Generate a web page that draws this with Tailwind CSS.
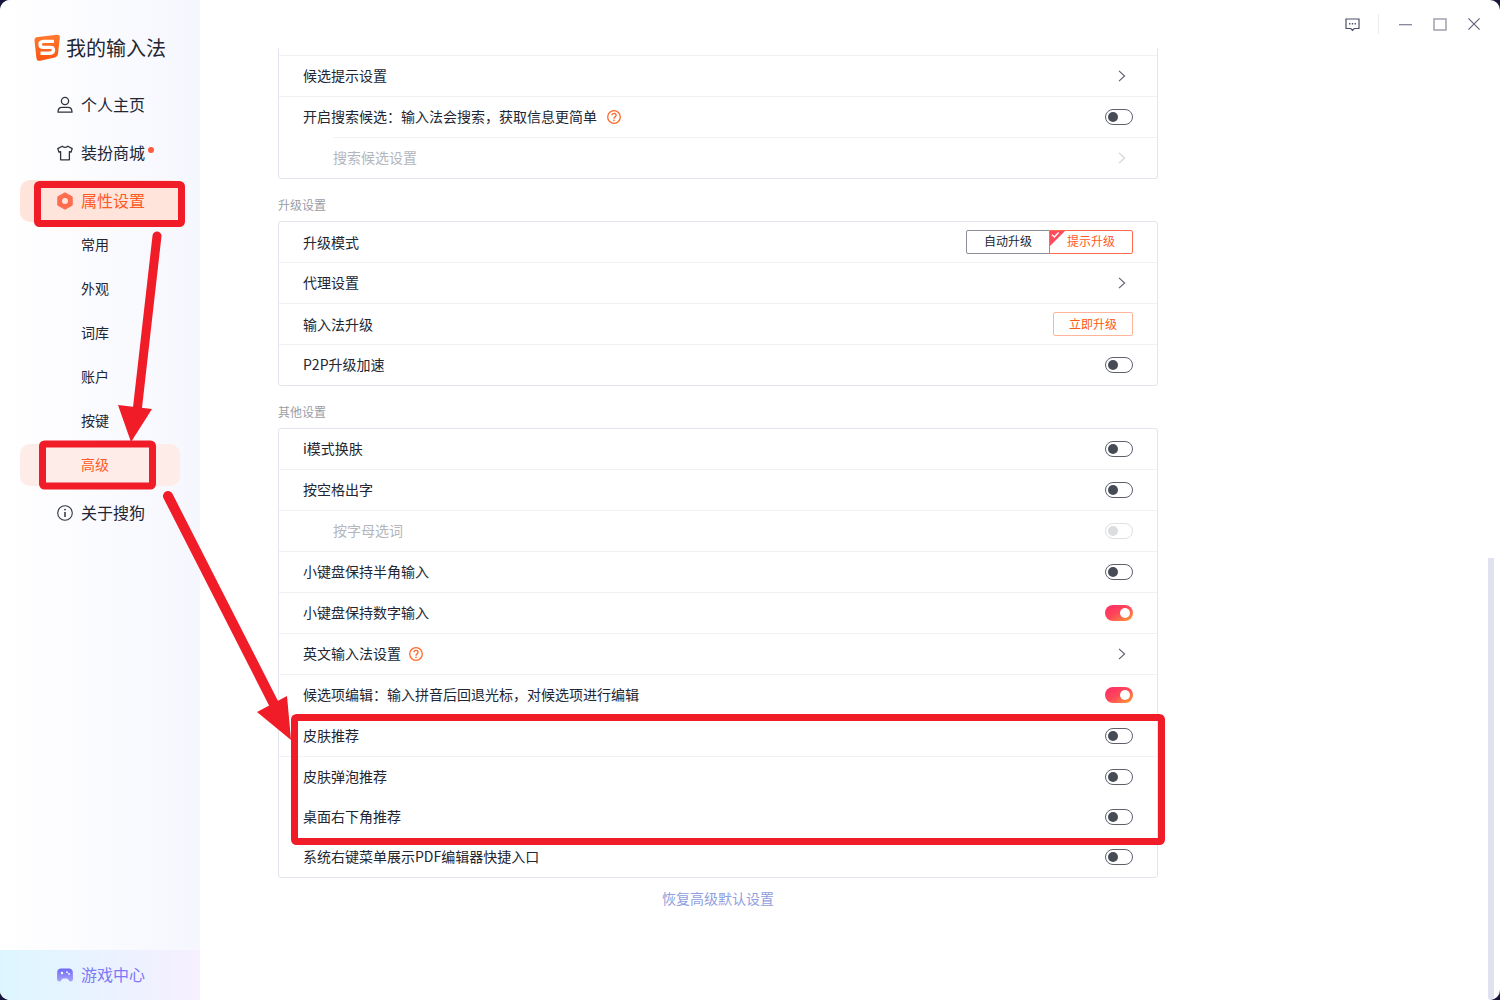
<!DOCTYPE html>
<html lang="zh-CN">
<head>
<meta charset="UTF-8">
<title>我的输入法</title>
<script src="https://cdn.jsdelivr.net/npm/@tailwindcss/browser@4"></script>
</head>
<body class="bg-[#17163f] font-['Noto_Sans_CJK_SC','Noto_Sans',sans-serif] text-[#222632]">

<div class="relative flex h-[1000px] w-[1500px] overflow-hidden rounded-[10px] bg-white">

    <!-- Sidebar -->
    <aside class="flex h-full w-[200px] shrink-0 flex-col bg-gradient-to-r from-white to-[#f6f7fe]">
        <div class="flex h-[81px] items-center gap-[5px] pl-[33px] pt-[15px]">
            <svg width="28" height="28" viewBox="0 0 28 28">
                <defs><linearGradient id="logo" x1="0" y1="0" x2="0" y2="1"><stop offset="0" stop-color="#ff7a2e"/><stop offset="1" stop-color="#fb5512"/></linearGradient></defs>
                <path d="M5 3 L24 0.8 Q27.2 0.6 26.8 3.6 L25 20 Q24.7 23 22 23.5 L7 26.8 Q3.8 27.2 3.4 24 L1.5 6.4 Q1.3 3.4 5 3 Z" fill="url(#logo)"/>
                <path d="M21 7.4 H10.5 Q7 7.6 7 10.6 Q7 13.4 10.5 13.4 H17.5 Q20.5 13.4 20.5 16 Q20.5 19 17 19.2 H7.5" fill="none" stroke="#fff" stroke-width="3.4"/>
            </svg>
            <span class="text-[20px] leading-none">我的输入法</span>
        </div>

        <a class="flex h-12 items-center gap-2 pl-[57px] text-base">
            <svg width="16" height="18" viewBox="0 0 16 18" fill="none" stroke="#2f3340" stroke-width="1.3"><circle cx="8" cy="5" r="3.6"/><path d="M1 16.2 Q1 11.4 5 11.4 H11 Q15 11.4 15 16.2 Z" stroke-linejoin="round"/></svg>
            <span class="mb-[2px]">个人主页</span>
        </a>
        <a class="flex h-12 items-center gap-2 pl-[57px] text-base">
            <svg width="16" height="16" viewBox="0 0 16 16" fill="none" stroke="#2f3340" stroke-width="1.3" stroke-linejoin="round"><path d="M5.2 1.2 Q8 3.6 10.8 1.2 L15.2 3.6 L14 7.2 L12.4 6.6 V14.8 H3.6 V6.6 L2 7.2 L0.8 3.6 Z"/></svg>
            <span class="relative mb-[2px]">装扮商城<span class="absolute left-[67px] top-[7px] h-[6px] w-[6px] rounded-full bg-[#ff5a3c]"></span></span>
        </a>
        <div class="flex h-12 items-center">
            <a class="mx-5 flex h-[42px] w-40 items-center gap-2 rounded-[10px] bg-[#ffe4dc] pl-[37px] text-base text-[#ff5a1f]">
                <svg width="16" height="18" viewBox="0 0 16 18"><path d="M8 0.8 L15.2 4.8 V13.2 L8 17.2 L0.8 13.2 V4.8 Z" fill="#ff6d4f" stroke="#ff6d4f" stroke-linejoin="round"/><circle cx="8" cy="9" r="3" fill="#ffe4dc"/></svg>
                <span class="mb-[2px]">属性设置</span>
            </a>
        </div>

        <div class="mt-[-2px] flex flex-col text-[14px]">
            <a class="flex h-11 items-center pb-[2px] pl-[81px]">常用</a>
            <a class="flex h-11 items-center pb-[2px] pl-[81px]">外观</a>
            <a class="flex h-11 items-center pb-[2px] pl-[81px]">词库</a>
            <a class="flex h-11 items-center pb-[2px] pl-[81px]">账户</a>
            <a class="flex h-11 items-center pb-[2px] pl-[81px]">按键</a>
            <div class="flex h-11 items-center">
                <a class="mx-5 flex h-[42px] w-40 items-center rounded-[10px] bg-[#fdece8] pb-[2px] pl-[61px] text-[#ff5a1f]">高级</a>
            </div>
        </div>

        <a class="mt-[2px] flex h-12 items-center gap-2 pl-[57px] text-base">
            <svg width="16" height="16" viewBox="0 0 16 16" fill="none" stroke="#2f3340" stroke-width="1.1"><circle cx="8" cy="8" r="7.3"/><path d="M8 7 V12" stroke-width="1.5"/><circle cx="8" cy="4.6" r="0.9" fill="#2f3340" stroke="none"/></svg>
            <span class="mb-[2px]">关于搜狗</span>
        </a>

        <a class="mt-auto flex h-[50px] items-center gap-2 bg-gradient-to-r from-[#dcf6ff] to-[#f6efff] pl-[57px] text-base text-[#7d78f5]">
            <svg width="16" height="14" viewBox="0 0 16 14"><defs><linearGradient id="pad" x1="0" y1="0" x2="0" y2="1"><stop offset="0" stop-color="#6f6af5"/><stop offset="1" stop-color="#a8a4fb"/></linearGradient></defs><path d="M4 0.5 H12 Q15.5 0.5 15.8 4 L16 10.5 Q16 13.5 13.6 13.5 Q12.2 13.5 11 11.2 Q10.6 10.5 9.8 10.5 H6.2 Q5.4 10.5 5 11.2 Q3.8 13.5 2.4 13.5 Q0 13.5 0 10.5 L0.2 4 Q0.5 0.5 4 0.5 Z" fill="url(#pad)"/><circle cx="5" cy="5" r="1.2" fill="#fff"/><circle cx="10" cy="4.2" r="0.9" fill="#fff"/><circle cx="12" cy="6" r="0.9" fill="#fff"/></svg>
            <span class="mb-[2px]">游戏中心</span>
        </a>
    </aside>

    <!-- Settings -->
    <main class="flex-1 pl-[78px] pt-12">
        <div class="w-[880px]">

            <div class="rounded-b-[3px] border-x border-b border-[#e3e5ee]">
                <div class="h-2 border-b border-[#f1f2f6]"></div>
                <div class="flex h-[41px] items-center justify-between border-b border-[#f1f2f6] px-6 text-sm">
                    <span class="mb-[2px]">候选提示设置</span>
                    <svg class="mr-[7px]" width="8" height="12" viewBox="0 0 8 12" fill="none" stroke="#5c606b" stroke-width="1.1"><path d="M1 0.8 L6.6 6 L1 11.2"/></svg>
                </div>
                <div class="flex h-10 items-center justify-between px-6 text-sm">
                    <span class="flex items-center gap-[10px]"><span class="mb-[2px]">开启搜索候选：输入法会搜索，获取信息更简单</span>
                        <svg width="14" height="14" viewBox="0 0 14 14" fill="none" stroke="#ff6a2b" stroke-width="1.3"><circle cx="7" cy="7" r="6.3"/><path d="M4.9 5.3 Q5 3.4 7 3.4 Q9.1 3.4 9.1 5.2 Q9.1 6.2 8 6.9 Q7 7.5 7 8.7"/><circle cx="7" cy="10.4" r="0.8" fill="#ff6a2b" stroke="none"/></svg>
                    </span>
                    <div class="relative h-4 w-7 rounded-full border border-[#5d616c]"><span class="absolute left-[2px] top-[2px] h-2.5 w-2.5 rounded-full bg-[#474b56]"></span></div>
                </div>
                <div class="ml-[54px] flex h-[41px] items-center justify-between border-t border-[#f1f2f6] pr-6 text-sm text-[#b4b6bd]">
                    <span class="mb-[2px]">搜索候选设置</span>
                    <svg class="mr-[7px]" width="8" height="12" viewBox="0 0 8 12" fill="none" stroke="#d0d2d8" stroke-width="1.1"><path d="M1 0.8 L6.6 6 L1 11.2"/></svg>
                </div>
            </div>

            <div class="flex h-[42px] items-center pt-[10px] text-xs text-[#9a9da6]">升级设置</div>
            <div class="rounded-[3px] border border-[#e3e5ee]">
                <div class="flex h-[41px] items-center justify-between border-b border-[#f1f2f6] px-6 text-sm">
                    升级模式
                    <div class="flex h-6 text-xs">
                        <span class="flex w-[84px] items-center justify-center rounded-l-[2px] border border-[#8b8e97] pb-[2px]">自动升级</span>
                        <span class="relative ml-[-1px] flex w-[84px] items-center justify-center overflow-hidden rounded-r-[2px] border border-[#ff6b4a] pb-[2px] text-[#ff5a1f]">
                            <svg class="absolute left-0 top-0" width="15" height="15" viewBox="0 0 15 15"><path d="M0 0 H15 L0 15 Z" fill="#ff4c5c"/><path d="M2 3.8 L4.4 6 L8.6 1.6" fill="none" stroke="#fff" stroke-width="1.4"/></svg>
                            提示升级
                        </span>
                    </div>
                </div>
                <div class="flex h-[41px] items-center justify-between border-b border-[#f1f2f6] px-6 text-sm">
                    <span class="mb-[2px]">代理设置</span>
                    <svg class="mr-[7px]" width="8" height="12" viewBox="0 0 8 12" fill="none" stroke="#5c606b" stroke-width="1.1"><path d="M1 0.8 L6.6 6 L1 11.2"/></svg>
                </div>
                <div class="flex h-[41px] items-center justify-between border-b border-[#f1f2f6] px-6 text-sm">
                    输入法升级
                    <button class="flex h-6 w-20 items-center justify-center rounded-[2px] border border-[#ffb59a] text-xs text-[#ff5a0f]">立即升级</button>
                </div>
                <div class="flex h-10 items-center justify-between px-6 text-sm">
                    <span class="mb-[2px]">P2P升级加速</span>
                    <div class="relative h-4 w-7 rounded-full border border-[#5d616c]"><span class="absolute left-[2px] top-[2px] h-2.5 w-2.5 rounded-full bg-[#474b56]"></span></div>
                </div>
            </div>

            <div class="flex h-[42px] items-center pt-[10px] text-xs text-[#9a9da6]">其他设置</div>
            <div class="rounded-[3px] border border-[#e3e5ee]">
                <div class="flex h-[41px] items-center justify-between border-b border-[#f1f2f6] px-6 text-sm">
                    <span class="mb-[2px]">i模式换肤</span>
                    <div class="relative h-4 w-7 rounded-full border border-[#5d616c]"><span class="absolute left-[2px] top-[2px] h-2.5 w-2.5 rounded-full bg-[#474b56]"></span></div>
                </div>
                <div class="flex h-[41px] items-center justify-between border-b border-[#f1f2f6] px-6 text-sm">
                    <span class="mb-[2px]">按空格出字</span>
                    <div class="relative h-4 w-7 rounded-full border border-[#5d616c]"><span class="absolute left-[2px] top-[2px] h-2.5 w-2.5 rounded-full bg-[#474b56]"></span></div>
                </div>
                <div class="flex h-[41px] items-center justify-between border-b border-[#f1f2f6] pl-[54px] pr-6 text-sm text-[#b4b6bd]">
                    <span class="mb-[2px]">按字母选词</span>
                    <div class="relative h-4 w-7 rounded-full border border-[#dfe0e3]"><span class="absolute left-[2px] top-[2px] h-2.5 w-2.5 rounded-full bg-[#dcdde0]"></span></div>
                </div>
                <div class="flex h-[41px] items-center justify-between border-b border-[#f1f2f6] px-6 text-sm">
                    <span class="mb-[2px]">小键盘保持半角输入</span>
                    <div class="relative h-4 w-7 rounded-full border border-[#5d616c]"><span class="absolute left-[2px] top-[2px] h-2.5 w-2.5 rounded-full bg-[#474b56]"></span></div>
                </div>
                <div class="flex h-[41px] items-center justify-between border-b border-[#f1f2f6] px-6 text-sm">
                    <span class="mb-[2px]">小键盘保持数字输入</span>
                    <div class="relative h-4 w-7 rounded-full bg-gradient-to-br from-[#ff2468] via-[#ff4858] to-[#ff9a1a]"><span class="absolute right-[3px] top-[3px] h-2.5 w-2.5 rounded-full bg-white"></span></div>
                </div>
                <div class="flex h-[41px] items-center justify-between border-b border-[#f1f2f6] px-6 text-sm">
                    <span class="flex items-center gap-[8px]"><span class="mb-[2px]">英文输入法设置</span>
                        <svg width="14" height="14" viewBox="0 0 14 14" fill="none" stroke="#ff6a2b" stroke-width="1.3"><circle cx="7" cy="7" r="6.3"/><path d="M4.9 5.3 Q5 3.4 7 3.4 Q9.1 3.4 9.1 5.2 Q9.1 6.2 8 6.9 Q7 7.5 7 8.7"/><circle cx="7" cy="10.4" r="0.8" fill="#ff6a2b" stroke="none"/></svg>
                    </span>
                    <svg class="mr-[7px]" width="8" height="12" viewBox="0 0 8 12" fill="none" stroke="#5c606b" stroke-width="1.1"><path d="M1 0.8 L6.6 6 L1 11.2"/></svg>
                </div>
                <div class="flex h-[41px] items-center justify-between border-b border-[#f1f2f6] px-6 text-sm">
                    <span class="mb-[2px]">候选项编辑：输入拼音后回退光标，对候选项进行编辑</span>
                    <div class="relative h-4 w-7 rounded-full bg-gradient-to-br from-[#ff2468] via-[#ff4858] to-[#ff9a1a]"><span class="absolute right-[3px] top-[3px] h-2.5 w-2.5 rounded-full bg-white"></span></div>
                </div>
                <div class="flex h-[41px] items-center justify-between border-b border-[#f1f2f6] px-6 text-sm">
                    <span class="mb-[2px]">皮肤推荐</span>
                    <div class="relative h-4 w-7 rounded-full border border-[#5d616c]"><span class="absolute left-[2px] top-[2px] h-2.5 w-2.5 rounded-full bg-[#474b56]"></span></div>
                </div>
                <div class="flex h-10 items-center justify-between px-6 text-sm">
                    <span class="mb-[2px]">皮肤弹泡推荐</span>
                    <div class="relative h-4 w-7 rounded-full border border-[#5d616c]"><span class="absolute left-[2px] top-[2px] h-2.5 w-2.5 rounded-full bg-[#474b56]"></span></div>
                </div>
                <div class="flex h-10 items-center justify-between px-6 text-sm">
                    <span class="mb-[2px]">桌面右下角推荐</span>
                    <div class="relative h-4 w-7 rounded-full border border-[#5d616c]"><span class="absolute left-[2px] top-[2px] h-2.5 w-2.5 rounded-full bg-[#474b56]"></span></div>
                </div>
                <div class="flex h-10 items-center justify-between px-6 text-sm">
                    <span class="mb-[2px]">系统右键菜单展示PDF编辑器快捷入口</span>
                    <div class="relative h-4 w-7 rounded-full border border-[#5d616c]"><span class="absolute left-[2px] top-[2px] h-2.5 w-2.5 rounded-full bg-[#474b56]"></span></div>
                </div>
            </div>

            <a class="flex h-[42px] items-center justify-center pb-[2px] text-sm text-[#8f9fe0]">恢复高级默认设置</a>
        </div>
    </main>

    <!-- Window controls -->
    <div class="absolute right-5 top-[14px] flex items-center">
        <svg width="15" height="15" viewBox="0 0 15 15" fill="none" stroke="#4b4f68" stroke-width="1.2"><path d="M1 2 H14 V11.5 H9.2 L7.5 13.4 L5.8 11.5 H1 Z"/><path d="M4 6.7 H5.4 M6.8 6.7 H8.2 M9.6 6.7 H11" stroke-width="1.6"/></svg>
        <span class="ml-[18px] mr-5 h-5 w-px bg-[#eceded]"></span>
        <svg width="13" height="13" viewBox="0 0 13 13" fill="none" stroke="#62657c" stroke-width="1.1"><path d="M0 6.8 H13"/></svg>
        <svg class="ml-[21px]" width="14" height="13" viewBox="0 0 14 13" fill="none" stroke="#a4a7b6" stroke-width="1.6"><rect x="1" y="1" width="12" height="11"/></svg>
        <svg class="ml-[21px]" width="12" height="12" viewBox="0 0 12 12" fill="none" stroke="#5b5e76" stroke-width="1.1"><path d="M0.4 0.4 L11.6 11.6 M11.6 0.4 L0.4 11.6"/></svg>
    </div>

    <!-- Scrollbar -->
    <div class="absolute bottom-0 left-[1488px] top-[558px] w-[6px] rounded-b-[4px] bg-[#e0e3ef]"></div>

    <!-- Red annotations -->
    <svg class="absolute left-0 top-0" width="1500" height="1000" viewBox="0 0 1500 1000" fill="none">
        <rect x="37.5" y="184.5" width="144" height="39" rx="2" stroke="#f01c27" stroke-width="7"/>
        <rect x="42.5" y="444" width="110" height="42" rx="2" stroke="#f01c27" stroke-width="7"/>
        <rect x="294.5" y="717.5" width="867" height="124" rx="2" stroke="#f01c27" stroke-width="7"/>
        <path d="M157 236 L137 412" stroke="#f01c27" stroke-width="9" stroke-linecap="round"/>
        <path d="M118 405 L152 409 L131 442 Z" fill="#f01c27"/>
        <path d="M168 496 L278 712" stroke="#f01c27" stroke-width="10" stroke-linecap="round"/>
        <path d="M257 712 L287 696 L291 740 Z" fill="#f01c27"/>
    </svg>
</div>

</body>
</html>
